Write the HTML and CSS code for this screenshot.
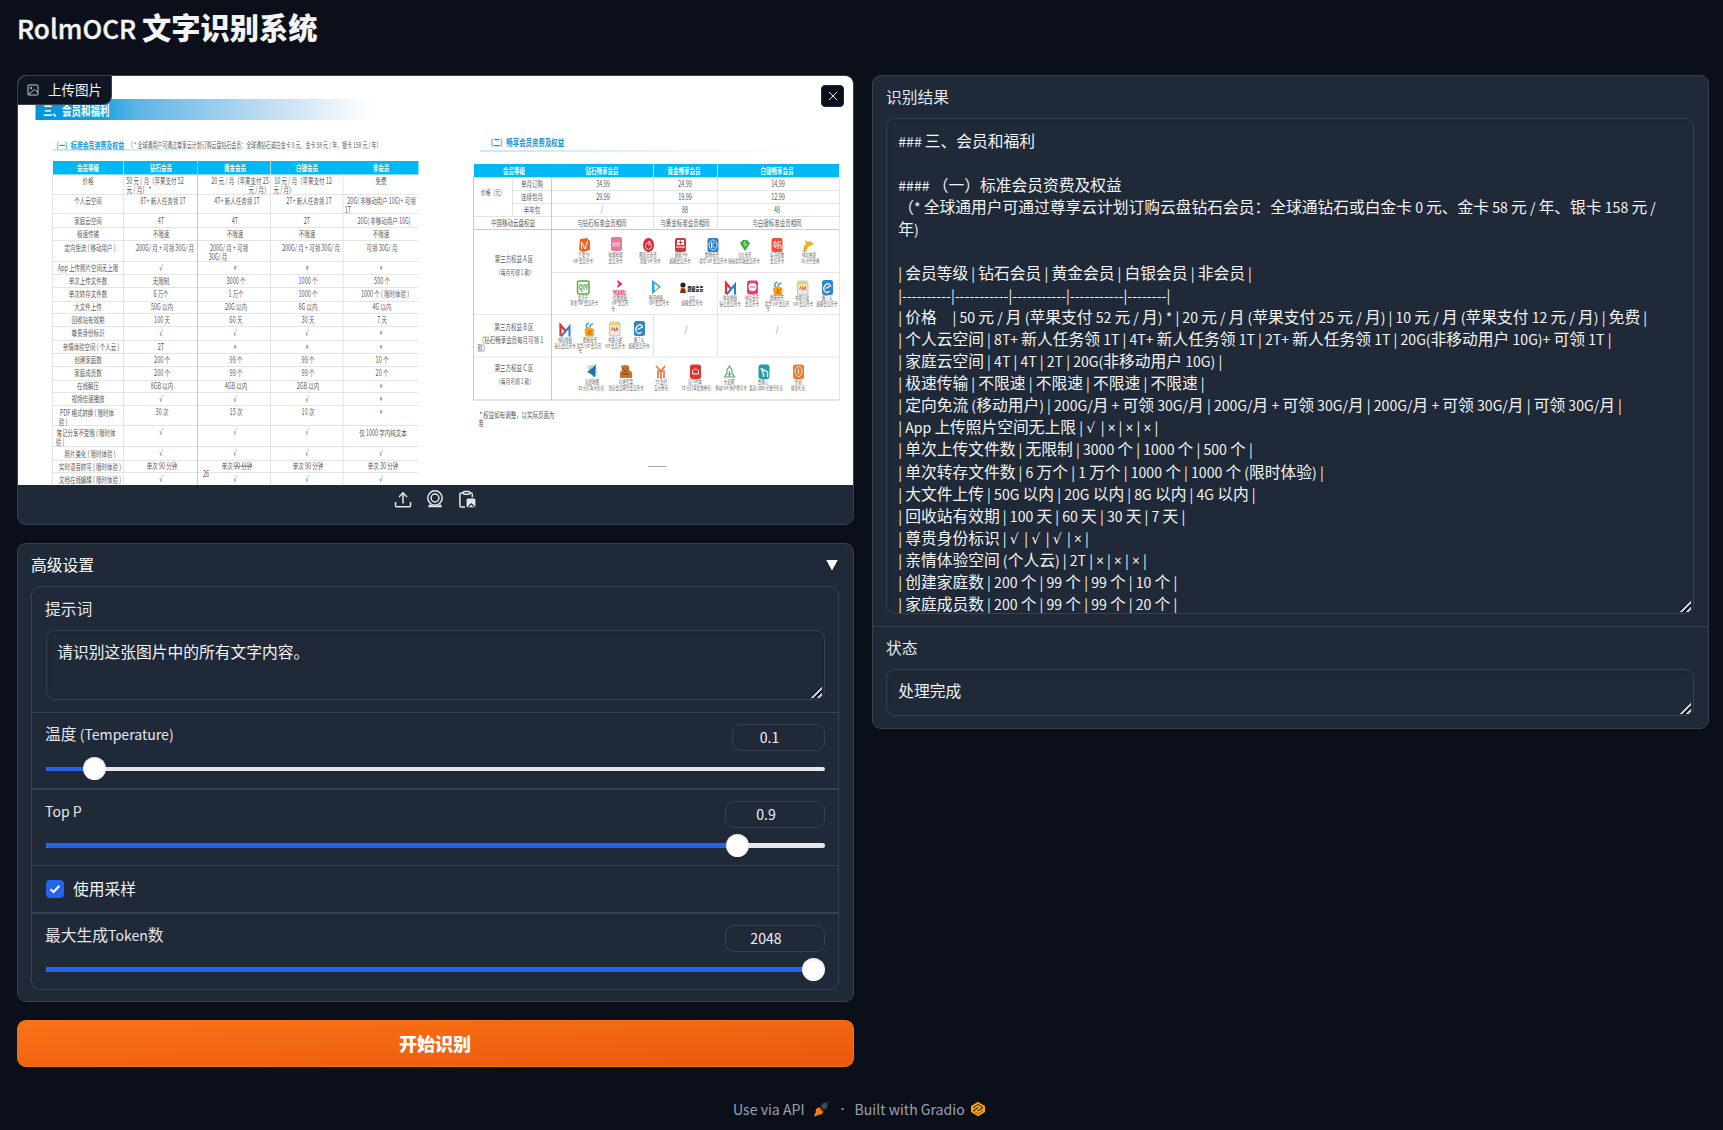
FILE: index.html
```html
<!DOCTYPE html>
<html lang="zh-CN">
<head>
<meta charset="utf-8">
<title>RolmOCR 文字识别系统</title>
<link rel="stylesheet" href="styles.css">
</head>
<body>
<main class="app">
  <h1 class="title">RolmOCR 文字识别系统</h1>
  <div class="columns">
    <section class="column">
      <div class="card upload">
        <svg class="scan" viewBox="18 76 835 409" width="835" height="409">
          <defs>
            <linearGradient id="banner"><stop offset="0" stop-color="#0094dc"/><stop offset=".2" stop-color="#1ba3e2"/><stop offset=".3" stop-color="#5db4e6"/><stop offset=".7" stop-color="#c3def3"/><stop offset="1" stop-color="#fff"/></linearGradient>
            <linearGradient id="rule"><stop offset="0" stop-color="#8fd3f2"/><stop offset="1" stop-color="#fff"/></linearGradient>
            <g id="mi"><path d="M-4.500 6v-11l5 6" fill="none" stroke="#e0303a" stroke-width="2.200"/><path d="M-4 6.500l8.500-10v10" fill="none" stroke="#2b7fd0" stroke-width="2"/></g>
            <g id="bag"><path d="M-4.500-1l4.500-2 5 2-.5 7.500h-8z" fill="#f6a21c"/><path d="M-2-2q-2-4 2-5m1 4q0-3 3-3" fill="none" stroke="#39a7df" stroke-width="1.600"/><path d="M0 0v5m3-5l-2.500 2.500L3 5" stroke="#d65b10" fill="none"/></g>
            <g id="book"><rect x="-5" y="-7" width="10.500" height="14" rx="2" fill="#f5e7d6" stroke="#7fb8d8" stroke-width=".7"/><path d="M-4.500-6.500h9.500v3h-9.500z" fill="#f0d653"/><path d="M-3 1.500l1-3 1 3m1-3v3h2v-3m1 3v-3" stroke="#d95a45" fill="none" stroke-width=".9"/></g>
            <g id="ele"><rect x="-5.500" y="-7.500" width="11" height="15" rx="2.500" fill="#2c87cf"/><path d="M-2 1l5-2.500q-2-4-5-1t-1 6 5 0" stroke="#fff" stroke-width="1.300" fill="none"/></g>
          </defs>
          <rect x="18" y="76" width="835" height="409" fill="#fff"/>
          <rect x="35.500" y="99" width="337" height="21" fill="url(#banner)"/>
          <g class="start">
            <text class="chapter" x="43" y="115.500">三、会员和福利</text>
            <text class="heading" x="53" y="149">（一）标准会员资费及权益</text>
            <text class="note" x="128" y="148.500">（ * 全球通用户可通过尊享云计划订购云盘钻石会员：全球通钻石或白金卡 0 元、金卡 58 元 / 年、银卡 158 元 / 年）</text>
            <text class="heading wide" x="487" y="146.500">（二）畅享会员资费及权益</text>
          </g>
          <rect x="53" y="149.500" width="300" height="1" fill="url(#rule)"/>
          <rect x="480" y="150.500" width="330" height="1" fill="url(#rule)"/>
          <rect x="53" y="161" width="365.500" height="13.500" fill="#00b9f4"/>
          <rect x="474" y="164" width="365" height="13.300" fill="#00b9f4"/>
          <path class="grid" d="M53 194.500H418.500M53 213.500H418.500M53 227.500H418.500M53 240.500H418.500M53 261.500H418.500M53 274.500H418.500M53 287.500H418.500M53 301.500H418.500M53 313.500H418.500M53 326.500H418.500M53 340.500H418.500M53 353.500H418.500M53 366.500H418.500M53 380.500H418.500M53 392.500H418.500M53 405.500H418.500M53 425.500H418.500M53 446.500H418.500M53 460.500H418.500M53 472.500H418.500M52.500 174V485M123.500 161V485M270.500 161V485M343 174V485"/>
          <path class="grid strong" d="M197.500 161V485"/>
          <path class="grid" d="M512 190.500H839M512 203.500H839M474 216.500H839M552 272.500H839M474 314.500H839M474 357H839M512.500 177V216M653.500 164V229M653.500 314V357M717.500 164V229M717.500 272V357M839.500 177V400"/>
          <path class="grid strong" d="M474 229.500H839M473.500 177V400H839M551.500 177V400"/>
          <g class="head">
            <text x="88" y="171">会员等级</text><text x="161" y="171">钻石会员</text><text x="235" y="171">黄金会员</text><text x="307" y="171">白银会员</text><text x="381" y="171">非会员</text>
            <text x="514" y="174">会员等级</text><text x="602" y="174">钻石畅享会员</text><text x="684" y="174">黄金畅享会员</text><text x="777" y="174">白银畅享会员</text>
          </g>
          <g>
            <text x="88" y="184">价格</text><text x="155" y="184">50 元 / 月（苹果支付 52</text><text x="139" y="193.500">元 / 月） *</text><text x="240" y="184">20 元 / 月（苹果支付 25</text><text x="259" y="193.500">元 / 月）</text><text x="303" y="184">10 元 / 月（苹果支付 12</text><text x="284" y="193.500">元 / 月）</text><text x="381" y="184">免费</text>
            <text x="88" y="204">个人云空间</text><text x="163" y="204">8T+ 新人任务领 1T</text><text x="237" y="204">4T+ 新人任务领 1T</text><text x="309" y="204">2T+ 新人任务领 1T</text><text x="381.500" y="204">20G( 非移动用户 10G)+ 可领</text><text x="348" y="213">1T</text>
            <text x="88" y="224">家庭云空间</text><text x="161" y="224">4T</text><text x="235" y="224">4T</text><text x="307" y="224">2T</text><text x="384" y="224">20G( 非移动用户 10G)</text>
            <text x="88" y="237">极速传输</text><text x="161" y="237">不限速</text><text x="235" y="237">不限速</text><text x="307" y="237">不限速</text><text x="381" y="237">不限速</text>
            <text x="90" y="251">定向免流 ( 移动用户 )</text><text x="165" y="251">200G/ 月 + 可领 30G/ 月</text><text x="229" y="251">200G/ 月 + 可领</text><text x="218" y="260">30G/ 月</text><text x="311" y="251">200G/ 月 + 可领 30G/ 月</text><text x="382" y="251">可领 30G/ 月</text>
            <text x="88" y="271">App 上传照片空间无上限</text><text class="mark" x="161" y="271">√</text><text class="mark" x="235" y="271">×</text><text class="mark" x="307" y="271">×</text><text class="mark" x="381" y="271">×</text>
            <text x="88" y="284">单次上传文件数</text><text x="161" y="284">无限制</text><text x="236" y="284">3000 个</text><text x="308" y="284">1000 个</text><text x="382" y="284">500 个</text>
            <text x="88" y="297">单次转存文件数</text><text x="161" y="297">6 万个</text><text x="236" y="297">1 万个</text><text x="308" y="297">1000 个</text><text x="385" y="297">1000 个 ( 限时体验 )</text>
            <text x="88" y="310">大文件上传</text><text x="162" y="310">50G 以内</text><text x="236" y="310">20G 以内</text><text x="308" y="310">8G 以内</text><text x="382" y="310">4G 以内</text>
            <text x="88" y="323">回收站有效期</text><text x="162" y="323">100 天</text><text x="236" y="323">60 天</text><text x="308" y="323">30 天</text><text x="382" y="323">7 天</text>
            <text x="88" y="336">尊贵身份标识</text><text class="mark" x="161" y="336">√</text><text class="mark" x="235" y="336">√</text><text class="mark" x="307" y="336">√</text><text class="mark" x="381" y="336">×</text>
            <text x="91" y="350">亲情体验空间 ( 个人云 )</text><text x="161" y="350">2T</text><text class="mark" x="235" y="350">×</text><text class="mark" x="307" y="350">×</text><text class="mark" x="381" y="350">×</text>
            <text x="88" y="363">创建家庭数</text><text x="162" y="363">200 个</text><text x="236" y="363">99 个</text><text x="308" y="363">99 个</text><text x="382" y="363">10 个</text>
            <text x="88" y="376">家庭成员数</text><text x="162" y="376">200 个</text><text x="236" y="376">99 个</text><text x="308" y="376">99 个</text><text x="382" y="376">20 个</text>
            <text x="88" y="389">在线解压</text><text x="162" y="389">8GB 以内</text><text x="236" y="389">4GB 以内</text><text x="308" y="389">2GB 以内</text><text class="mark" x="381" y="389">×</text>
            <text x="88" y="402">视频倍速播放</text><text class="mark" x="161" y="402">√</text><text class="mark" x="235" y="402">√</text><text class="mark" x="307" y="402">√</text><text class="mark" x="381" y="402">×</text>
            <text x="87" y="416">PDF 格式转换 ( 限时体</text><text x="63" y="425">验 )</text><text x="162" y="415">30 次</text><text x="236" y="415">15 次</text><text x="308" y="415">10 次</text><text class="mark" x="381" y="415">×</text>
            <text x="86" y="436">笔记分享不受限 ( 限时体</text><text x="60" y="445">验 )</text><text class="mark" x="161" y="435">√</text><text class="mark" x="235" y="435">√</text><text class="mark" x="307" y="435">√</text><text x="383" y="436">仅 1000 字内纯文本</text>
            <text x="90" y="457">照片美化 ( 限时体验 )</text><text class="mark" x="161" y="456">√</text><text class="mark" x="235" y="456">√</text><text class="mark" x="307" y="456">√</text><text class="mark" x="381" y="456">√</text>
            <text x="90" y="470">实时语音转写 ( 限时体验 )</text><text x="162" y="469">单次 90 分钟</text><text x="237" y="469">单次 90 分钟</text><text x="308" y="469">单次 90 分钟</text><text x="383" y="469">单次 30 分钟</text>
            <text x="90" y="483">文档在线编辑 ( 限时体验 )</text><text class="mark" x="161" y="482">√</text><text class="mark" x="235" y="482">√</text><text class="mark" x="307" y="482">√</text><text class="mark" x="381" y="482">√</text>
            <text x="206" y="477">26</text>
          </g>
          <path d="M233 466.500H252" stroke="#777" stroke-width=".7"/>
          <g>
            <text x="532" y="187">单月订购</text><text x="603" y="187">34.99</text><text x="685" y="187">24.99</text><text x="778" y="187">14.99</text>
            <text class="small" x="493" y="195">价格（元）</text>
            <text x="532" y="200">连续包月</text><text x="603" y="200">29.99</text><text x="685" y="200">19.99</text><text x="778" y="200">12.99</text>
            <text x="532" y="213">半年包</text><text x="602" y="213">/</text><text x="685" y="213">88</text><text x="777" y="213">48</text>
            <text x="513" y="226">中国移动云盘权益</text><text x="602" y="226">与钻石标准会员相同</text><text x="685" y="226">与黄金标准会员相同</text><text x="777" y="226">与白银标准会员相同</text>
            <text x="514" y="262">第三方权益 A 区</text><text class="small" x="515" y="275">（每月可领 1 款）</text>
            <text x="514" y="330">第三方权益 B 区</text><text x="511" y="343">（钻石畅享会员每月可领 1</text><text x="483" y="351">款）</text><text x="686" y="333">/</text><text x="777" y="333">/</text>
            <text x="514" y="371">第三方权益 C 区</text><text class="small" x="515" y="384">（每月可领 1 款）</text>
            <text x="517" y="418">* 权益如有调整，以实际页面为</text><text x="481" y="426">准</text>
          </g>
          <rect x="648" y="466" width="19" height="1" fill="#aaa"/>
          <g>
            <path d="M580 239l7-1 3 3v9l-7 2-4-2z" fill="#ee6528"/><path d="M581.500 249v-7l3.500 7 2.500-8" fill="none" stroke="#fff"/>
            <rect x="611" y="237" width="11" height="14" rx="2" fill="#e87898"/><path d="M613 242v4h2v-4m2 0v4h2v-4" stroke="#fff" stroke-width=".7" fill="none"/>
            <ellipse cx="648.500" cy="245" rx="5.500" ry="7" fill="#d42634"/><ellipse cx="648.500" cy="246" rx="3" ry="3.500" fill="none" stroke="#fff" stroke-width=".8"/><path d="M649 246v-5l2 1" fill="none" stroke="#fff" stroke-width=".8"/>
            <rect x="675" y="238" width="11" height="14" rx="2" fill="#da343b"/><rect x="677" y="240" width="7" height="5" fill="#fff"/><path d="M676 247h9" stroke="#fff"/><path d="M680.500 240.500v4M678.500 242.500h4" stroke="#da343b"/>
            <rect x="707.500" y="238" width="11" height="14" rx="2" fill="#287fc8"/><ellipse cx="713" cy="245" rx="4" ry="5" fill="none" stroke="#fff" stroke-width=".8"/><path d="M711.500 242v6m3-6l-3 3 3 3" stroke="#fff" fill="none"/>
            <path d="M740 243l3-3h4l3 3-5 8z" fill="#2bac55"/><path d="M745.500 241l-2 3h3l-2 3" stroke="#e5ed3d" fill="none"/>
            <rect x="771.500" y="238" width="11" height="14" rx="2" fill="#ee5136"/><path d="M774 242h2v5h-2zM778 249v-7h3m-3 3h3v4" stroke="#fff" fill="none" stroke-width=".9"/>
            <path d="M805 240l3 2 2-1 4 3-4 2-2 1-2 5h-3l1-6 2-2z" fill="#efad23"/>
            <rect x="577.500" y="281" width="11.500" height="13" rx="2" fill="#fff" stroke="#67a53f" stroke-width="1.500"/><text class="brand green" x="583.300" y="290.500">QIY</text>
            <path d="M617.500 280l5 4-5 4v-3l2-1-2-1z" fill="#e72264"/><text class="brand pink" x="619.500" y="295">YOUKU</text>
            <path d="M652 280l9 7-9 7z" fill="#8ac345"/><path d="M652 280l9 7h-5z" fill="#32a6d9"/><path d="M652 280l3 2.500v9L652 294z" fill="#32a6d9"/><path d="M654.500 283.500l4 3.500-4 3.500z" fill="#fff"/>
            <circle cx="683" cy="285" r="2.600" fill="#222"/><path d="M681 288h4l1 5h-6z" fill="#932b16"/><path d="M680.500 288h5" stroke="#e8a92a"/><text class="brand" x="695.500" y="291">超级会员</text>
            <use href="#mi" x="730.500" y="288"/><rect x="747" y="280.500" width="11" height="14" rx="2.500" fill="#ea3f78"/><ellipse cx="752.500" cy="287" rx="4" ry="4" fill="#fff"/><path d="M750 287h5" stroke="#ea3f78"/>
            <use href="#bag" x="777.500" y="289"/><use href="#book" x="802.500" y="288"/><use href="#ele" x="827.500" y="287.500"/>
            <use href="#mi" x="565" y="330"/><use href="#bag" x="589" y="330"/><use href="#book" x="614.500" y="329"/><use href="#ele" x="639.500" y="328.500"/>
            <path d="M587 366l9-2 1 12-4 2z" fill="#bde0b0"/><path d="M587 372l9-7-1 12-4-3z" fill="#1d70bc"/>
            <path d="M621 366q4-2 8 0l0 4 3 2v6h-12v-6l2-2z" fill="#c8752b"/><path d="M623 369h1m3 0h1m-6 5h7m-5-3h3" stroke="#6b3a18"/>
            <path d="M656 366l5 5 4-5m-8 5q7 0 8 0m-4 0v8m-3-7v6m6-6v6" stroke="#ef7440" stroke-width="1.700" fill="none"/>
            <rect x="690" y="364.500" width="11" height="14.500" rx="2.500" fill="#dd3437"/><path d="M692.500 374v-3q3-4 6 0v3z" fill="none" stroke="#fff"/>
            <path d="M729.500 366l-2.500 4v3l-2.500 4h10l-2.500-4v-3z" fill="none" stroke="#4dae5b" stroke-width="1.100"/><path d="M729.500 371v6m-2-3h4" stroke="#4dae5b"/>
            <rect x="758.500" y="364.500" width="11" height="14.500" rx="2.500" fill="#219ca9"/><path d="M760.500 369h2v3l2-2 3 2v5m-4-4v4" stroke="#fff" stroke-width="1.400" fill="none"/>
            <rect x="793" y="364.500" width="11" height="14.500" rx="2.500" fill="#e97e33"/><ellipse cx="798.500" cy="371.500" rx="3.500" ry="5" fill="none" stroke="#fff" stroke-width=".8"/><path d="M798.500 369v5" stroke="#fff"/>
          </g>
          <g class="tiny">
            <text x="584" y="257">芒果 TV</text><text x="583" y="263">VIP 会员月卡</text><text x="615.500" y="257">哔哩哔哩</text><text x="615.500" y="263">会员月卡</text><text x="648" y="257">网易云音乐</text><text x="650" y="263">黑胶 VIP 月卡</text><text x="681" y="257">蜻蜓 FM</text><text x="680" y="263">超级会员月卡</text><text x="712" y="257">酷狗音乐</text><text x="713" y="263">豪华 VIP 会员月卡</text><text x="745" y="257">QQ 音乐</text><text x="744" y="263">绿钻豪华版会员月卡</text><text x="777" y="257">喜马拉雅</text><text x="777" y="263">会员月卡</text><text x="809" y="257">咪咕快游</text><text x="810" y="263">30 元代金券</text>
            <text x="583" y="300">爱奇艺</text><text x="584" y="305.500">黄金 VIP 会员月卡</text><text x="620" y="300">优酷视频</text><text x="620" y="305.500">VIP 会员月</text><text x="613" y="311">卡</text><text x="656" y="300">腾讯视频</text><text x="659" y="305.500">VIP 会员月卡</text><text x="692" y="300">QQ</text><text x="692" y="305.500">超级会员月卡</text><text x="730" y="300">咪咕视频</text><text x="730" y="306">钻石会员月卡</text><text x="752" y="300">咪咕音乐</text><text x="752" y="306">会员月卡</text><text x="777" y="300">酷我音乐</text><text x="777" y="306">豪华 VIP 会员月</text><text x="768" y="311">卡</text><text x="802" y="300">书旗小说</text><text x="803" y="306">VIP 会员月卡</text><text x="827" y="300">饿了么</text><text x="827" y="306">超级会员月卡</text>
            <text x="565" y="342">咪咕视频</text><text x="565" y="348">钻石会员月卡</text><text x="590" y="342">酷我音乐</text><text x="589" y="348">豪华 VIP 会员月</text><text x="580" y="353">卡</text><text x="615" y="342">书旗小说</text><text x="615" y="348">VIP 会员月卡</text><text x="639" y="342">饿了么</text><text x="639" y="348">超级会员月卡</text>
            <text x="592" y="384.500">高德地图</text><text x="591" y="390.500">50 元打车大礼包</text><text x="626" y="384.500">叮咚买菜</text><text x="626" y="390.500">到店会员联合会员月卡</text><text x="661" y="384.500">T3 出行</text><text x="661" y="390.500">五元券包</text><text x="695" y="384.500">首汽约车</text><text x="696" y="390.500">70 元打车优惠券包</text><text x="729" y="384.500">大麦网</text><text x="731" y="390.500">移动 VIP 用户尊享卡</text><text x="763" y="384.500">去哪儿</text><text x="766" y="390.500">最高 1000 元旅行礼包</text><text x="798" y="384.500">乐刻</text><text x="798" y="390.500">健身礼包</text>
          </g>
        </svg>
        <div class="chip">
          <svg class="chip-icon" viewBox="0 0 12 12"><rect x="1" y="1" width="10" height="10" rx=".8"/><circle cx="4" cy="4" r=".8"/><path d="M1.300 10.500L7.500 5.500 11 8.500"/></svg>
          <span>上传图片</span>
        </div>
        <button class="close" aria-label="清除"><svg viewBox="0 0 10 10"><path d="M1 1l8 8M9 1L1 9"/></svg></button>
        <div class="sources">
          <svg viewBox="0 0 18 18"><path d="M1.500 12v3.700q0 1 1 1h13q1 0 1-1V12M9 13.500V3M5 7l4-4.200L13 7"/></svg>
          <svg viewBox="0 0 18 18"><circle cx="9" cy="8" r="7.200"/><circle cx="9" cy="8" r="3.900"/><path class="solid" d="M3.200 14.200q5.800 3.200 11.600 0l1.200 3.100H2z"/></svg>
          <svg viewBox="0 0 18 18"><path d="M7 17H3.200q-1.300 0-1.300-1.300V4.200q0-1.300 1.300-1.300h2M12 2.900h1q1.300 0 1.300 1.300v3"/><rect x="5.200" y="1.400" width="6.700" height="2.900" rx="1.400"/><path class="solid" fill-rule="evenodd" d="M10 8.500h6q1.400 0 1.400 1.400v6q0 1.400-1.400 1.400h-6q-1.400 0-1.400-1.400v-6q0-1.400 1.400-1.400zm-.2 7.700l3.500-3.200 3.500 3.200-1 .9-2.500-2.300-2.500 2.300z"/></svg>
        </div>
      </div>

      <div class="card settings">
        <div class="settings-head"><span>高级设置</span><span class="arrow"></span></div>
        <div class="form">
          <div class="block prompt"><div class="label">提示词</div><div class="textarea">请识别这张图片中的所有文字内容。</div></div>
          <div class="block slider-block">
            <div class="row"><span class="label">温度 (Temperature)</span><div class="number narrow">0.1</div></div>
            <div class="slider"><div class="track thin"><div class="fill" style="width:48px"></div></div><div class="thumb" style="left:37px"></div></div>
          </div>
          <div class="block slider-block">
            <div class="row"><span class="label">Top P</span><div class="number">0.9</div></div>
            <div class="slider"><div class="track"><div class="fill" style="width:691px"></div></div><div class="thumb" style="left:680px"></div></div>
          </div>
          <div class="block check-block"><span class="checkbox"><svg viewBox="0 0 18 18"><path d="M4.500 9.300l3 2.700 6-6.300"/></svg></span><span class="check-text">使用采样</span></div>
          <div class="block slider-block">
            <div class="row"><span class="label">最大生成Token数</span><div class="number">2048</div></div>
            <div class="slider"><div class="track"><div class="fill" style="width:767px"></div></div><div class="thumb" style="left:756px"></div></div>
          </div>
        </div>
      </div>
      <button class="primary">开始识别</button>
    </section>

    <section class="column">
      <div class="card results">
        <div class="block"><div class="label">识别结果</div><div class="textarea output">### 三、会员和福利

#### （一）标准会员资费及权益
（* 全球通用户可通过尊享云计划订购云盘钻石会员：全球通钻石或白金卡 0 元、金卡 58 元 / 年、银卡 158 元 /
年)

| 会员等级 | 钻石会员 | 黄金会员 | 白银会员 | 非会员 |
|----------|-----------|-----------|-----------|--------|
| 价格     | 50 元 / 月 (苹果支付 52 元 / 月) * | 20 元 / 月 (苹果支付 25 元 / 月) | 10 元 / 月 (苹果支付 12 元 / 月) | 免费 |
| 个人云空间 | 8T+ 新人任务领 1T | 4T+ 新人任务领 1T | 2T+ 新人任务领 1T | 20G(非移动用户 10G)+ 可领 1T |
| 家庭云空间 | 4T | 4T | 2T | 20G(非移动用户 10G) |
| 极速传输 | 不限速 | 不限速 | 不限速 | 不限速 |
| 定向免流 (移动用户) | 200G/月 + 可领 30G/月 | 200G/月 + 可领 30G/月 | 200G/月 + 可领 30G/月 | 可领 30G/月 |
| App 上传照片空间无上限 | √ | × | × | × |
| 单次上传文件数 | 无限制 | 3000 个 | 1000 个 | 500 个 |
| 单次转存文件数 | 6 万个 | 1 万个 | 1000 个 | 1000 个 (限时体验) |
| 大文件上传 | 50G 以内 | 20G 以内 | 8G 以内 | 4G 以内 |
| 回收站有效期 | 100 天 | 60 天 | 30 天 | 7 天 |
| 尊贵身份标识 | √ | √ | √ | × |
| 亲情体验空间 (个人云) | 2T | × | × | × |
| 创建家庭数 | 200 个 | 99 个 | 99 个 | 10 个 |
| 家庭成员数 | 200 个 | 99 个 | 99 个 | 20 个 |</div></div>
        <div class="block status"><div class="label">状态</div><div class="textarea">处理完成</div></div>
      </div>
    </section>
  </div>
  <footer class="footer">
    <span>Use via API</span>
    <svg class="rocket" viewBox="0 0 16 16"><path d="M8 5l2-3 3-.5 1.500 2L14 7l-3 2z" fill="#3f4a5c"/><path d="M13 2.500L15.500.5" stroke="#3f4a5c"/><path d="M3 8l3.500-2 4 4-1.500 3-4 1-3 1.500L1 15l1.500-3z" fill="#ff7c00"/><path d="M7 7.500l3 3" stroke="#0b0f19"/></svg>
    <span class="dot">·</span>
    <span>Built with Gradio</span>
    <svg class="gradio" viewBox="0 0 16 16"><path d="M8 2l6 3.600v4.800L8 14l-6-3.600V5.600z" fill="none" stroke="#ffa10a" stroke-width="2"/><path d="M2 9l6-4 2.500 1.600L5.500 10 8 11.500 14 7.500" fill="none" stroke="#ffae12" stroke-width="1.700"/></svg>
  </footer>
</main>
<script src="script.js"></script>
</body>
</html>
```
FILE: styles.css
```css
* { box-sizing: border-box; }
body {
  margin: 0;
  height: 1130px;
  overflow: hidden;
  background: #0b0f19;
  color: #f3f4f6;
  font-family: "Noto Sans CJK SC", sans-serif;
  font-size: 15.75px;
  line-height: 22.05px;
  color-scheme: dark;
}
.latin { font-size: .895em; }
.symbol { display: inline-block; line-height: 1; font-family: "DejaVu Sans", sans-serif; }
.root { width: 11.3px; font-size: 14px; }
.times { width: 7.8px; font-family: "Noto Sans", sans-serif; font-size: 13.6px; }
.app { padding: 0 17px; width: 1726px; }
.title { margin: 0; padding-top: 8px; height: 75px; font-size: 29.25px; line-height: 37px; font-weight: 900; }
.title .latin { font-weight: 500; -webkit-text-stroke: .4px #f3f4f6; }
.columns { display: flex; gap: 18px; height: 992px; align-items: flex-start; }
.column { width: 837px; display: flex; flex-direction: column; gap: 18px; }
.card { border: 1px solid #374151; border-radius: 9px; background: #1f2937; overflow: hidden; }

.upload { position: relative; height: 450px; }
.scan { display: block; font-size: 8.300px; }
.scan text { fill: #5a5a5a; text-anchor: middle; transform: scaleX(.66); transform-box: fill-box; transform-origin: center; }
.scan .start text { text-anchor: start; transform-origin: left; }
.scan .start .chapter { font-size: 13px; font-weight: 700; fill: #fff; transform: scaleX(.73); }
.scan .heading { font-size: 9px; font-weight: 700; fill: #1796db; }
.scan .start .wide { font-size: 9.200px; transform: scaleX(.7); }
.scan .note { font-size: 7.500px; }
.scan .small { font-size: 7.200px; }
.scan .mark { font-family: "Noto Sans", "DejaVu Sans", sans-serif; }
.scan .head text { fill: #fff; font-weight: 700; }
.scan .tiny text { font-size: 5.300px; fill: #666; }
.scan .brand { font-size: 6px; font-weight: 900; fill: #222; }
.scan .green { fill: #67a53f; font-size: 8px; }
.scan .pink { fill: #e72264; font-size: 5.500px; }
.grid { fill: none; stroke: #dedede; stroke-width: .8; }
.strong { stroke: #bdbdbd; }
.chip {
  position: absolute; left: -1px; top: -1px; width: 95px; height: 30px;
  display: flex; align-items: center; gap: 9px; padding-left: 9px;
  border: 1px solid #374151; border-radius: 9px 0; background: #0f1623;
  font-size: 13.500px; line-height: 20px; padding-bottom: 3px;
}
.chip-icon { width: 12px; height: 12px; fill: none; stroke: #c5cad2; stroke-width: 1; margin-top: 2px; }
.close {
  position: absolute; right: 9px; top: 9px; width: 23px; height: 22px; padding: 0;
  display: flex; align-items: center; justify-content: center;
  border: 1px solid #1f2937; border-radius: 4px; background: #0b0f19;
}
.close svg { width: 10px; height: 10px; stroke: #e5e7eb; fill: none; }
.sources { display: flex; justify-content: center; gap: 14px; padding: 5px 2px 0 0; }
.sources svg { width: 18px; height: 18px; fill: none; stroke: #e5e7eb; stroke-width: 1.500; }
.sources .solid { fill: #e5e7eb; stroke: none; }

.settings { height: 459px; padding: 0 14px 0 13px; }
.settings-head { display: flex; align-items: center; justify-content: space-between; height: 42px; color: #fff; }
.arrow { width: 12px; height: 11px; background: #fff; clip-path: polygon(0 0, 100% 0, 50% 100%); margin-right: 1px; }
.form { border: 1px solid #374151; border-radius: 9px; height: 404px; overflow: hidden; }
.block { padding: 11px 13px 11px 14px; }
.label { display: block; color: #e5e7eb; }
.form .label { margin-left: -1px; }
.row .label { margin-top: -1px; }
.textarea {
  position: relative;
  border: 1px solid #374151; border-radius: 9px; padding: 10.250px 11.250px 11.250px;
  overflow: hidden; white-space: pre-wrap;
  box-shadow: inset 0 2px 4px rgba(0, 0, 0, .05);
}
.textarea::after {
  content: ""; position: absolute; right: 2px; bottom: 1px; width: 11px; height: 11px;
  background: linear-gradient(135deg, transparent 42%, #0b0f19 42% 48%, #c4c7cc 48% 62%, #0b0f19 62% 76%, #c4c7cc 76% 90%, transparent 90%);
}
.prompt { height: 125px; }
.prompt .textarea { height: 70px; margin-top: 10px; padding-left: 10.250px; }
.slider-block { height: 76px; border-top: 1px solid #374151; padding-bottom: 0; }
.slider-block + .slider-block, .check-block + .slider-block { border-top-width: 2px; height: 77px; }
.row { display: flex; justify-content: space-between; height: 27px; }
.number {
  width: 100px; height: 27px; padding-right: 18px; text-align: center; line-height: 24px;
  border: 1px solid #374151; border-radius: 9px;
}
.narrow { width: 93px; }
.slider { position: relative; height: 23px; margin-top: 6px; display: flex; align-items: center; }
.track { flex: 1; height: 5px; border-radius: 3px; overflow: hidden; background: #e5e7eb; }
.thin { height: 4px; }
.fill { height: 100%; background: #2563eb; }
.thumb { position: absolute; top: 0; width: 23px; height: 23px; border-radius: 50%; background: #fff; box-shadow: inset 0 1px 3px rgba(0, 0, 0, .15); }
.check-block { display: flex; align-items: center; gap: 9px; height: 47px; border-top: 1px solid #374151; }
.checkbox { width: 18px; height: 18px; border-radius: 4px; background: #2563eb; }
.checkbox svg { display: block; fill: none; stroke: #fff; stroke-width: 2.200; }
.primary {
  height: 47px; padding: 0 1px 2px 0; border: 1px solid #f97316; border-radius: 9px;
  background: linear-gradient(to bottom right, #f97316, #ea580c);
  color: #fff; font: 900 18px/24px "Noto Sans CJK SC", sans-serif;
}
.results { height: 654px; }
.results .block { height: 550px; padding: 10px 14px 0 13px; }
.output { height: 496px; margin-top: 10px; padding-top: 10.750px; padding-bottom: 0; }
.results .status { height: 102px; border-top: 1px solid #374151; }
.status .textarea { height: 47px; margin-top: 10px; }
.footer { display: flex; align-items: center; height: 22px; margin-top: 31px; padding-left: 716px; color: #9ca3af; }
.rocket { width: 16px; height: 16px; margin-left: 8px; }
.dot { width: 4px; margin: 0 10px 0 12px; display: flex; justify-content: center; }
.dot .latin { font-size: 10px; }
.gradio { width: 16px; height: 16px; margin-left: 5px; }
```
FILE: script.js
```js
// Latin runs are set slightly smaller than the Chinese text around them.
const walker = document.createTreeWalker(document.querySelector('.app'), NodeFilter.SHOW_TEXT);
const nodes = [];
while (walker.nextNode()) {
  const node = walker.currentNode;
  if (node.nodeValue.trim() && !node.parentElement.closest('svg')) nodes.push(node);
}
const symbols = { '√': 'symbol root', '×': 'symbol times' };
for (const node of nodes) {
  const fragment = document.createDocumentFragment();
  for (const part of node.nodeValue.split(/([\x20-\x7e·]+|√|×)/)) {
    if (!part) continue;
    if (symbols[part] || /^[\x20-\x7e·]/.test(part)) {
      const span = document.createElement('span');
      span.className = symbols[part] || 'latin';
      span.textContent = part;
      fragment.append(span);
    } else {
      fragment.append(part);
    }
  }
  node.replaceWith(fragment);
}
```
